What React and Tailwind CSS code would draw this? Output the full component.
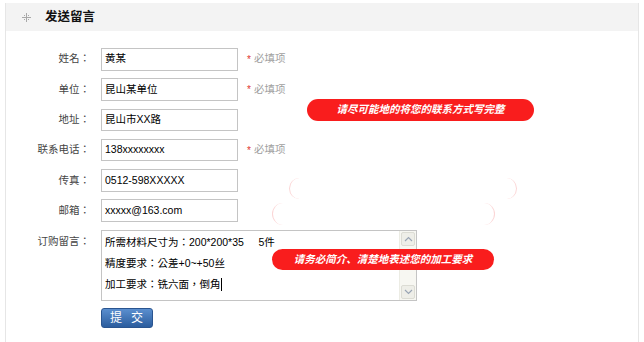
import React from 'react';

const font = { fontFamily: '"Liberation Sans", "Noto Sans CJK TC", "Noto Sans CJK SC", sans-serif' };
const pillFont = { fontFamily: '"Liberation Sans", "Noto Sans CJK SC", sans-serif' };

const fields = [
  { label: '姓名：', value: '黄某', required: true },
  { label: '单位：', value: '昆山某单位', required: true },
  { label: '地址：', value: '昆山市XX路', required: false },
  { label: '联系电话：', value: '138xxxxxxxx', required: true },
  { label: '传真：', value: '0512-598XXXXX', required: false },
  { label: '邮箱：', value: 'xxxxx@163.com', required: false },
];

const GridIcon = () => (
  <svg width="9" height="9" viewBox="0 0 9 9" className="text-[#a8a8a8]">
    <path d="M4.5 0v9M0 4.5h9" stroke="currentColor" strokeWidth="1" />
    <path d="M2 2h1v1H2zM6 2h1v1H6zM2 6h1v1H2zM6 6h1v1H6z" fill="currentColor" />
  </svg>
);

const Chevron = ({ up }) => (
  <svg width="9" height="6" viewBox="0 0 9 6">
    <path d={up ? 'M1 5l3.5-3.5L8 5' : 'M1 1l3.5 3.5L8 1'} fill="none" stroke="#9aa5b5" strokeWidth="1.2" />
  </svg>
);

const App = () => {
  return (
    <div className="relative w-[644px] h-[342px] overflow-hidden bg-white pt-[3px] pl-[5px]" style={font}>
      <div className="w-[634px] h-[400px] border-x border-[#e6e6e6]">
        <div className="h-[28px] bg-[#f3f3f3] flex items-center pl-[16px]">
          <GridIcon />
          <span className="ml-[14px] text-[12.5px] font-bold text-[#111]">发送留言</span>
        </div>

        <div className="pt-[17px] flex flex-col gap-[7.8px]">
          {fields.map((f) => (
            <div key={f.label} className="flex items-center h-[22.5px]">
              <div className="w-[84px] text-right text-[10.5px] text-[#444]">{f.label}</div>
              <div className="ml-[11px] w-[137px] h-[22.5px] border border-[#c4c4c4] flex items-center pl-[3px] text-[10.5px] text-black">
                {f.value}
              </div>
              {f.required && (
                <div className="ml-[9px] flex items-center text-[10.5px] text-[#a0a0a0]">
                  <span className="text-[#e0342f] text-[10px] mr-[3px]">*</span>
                  必填项
                </div>
              )}
            </div>
          ))}

          <div className="flex items-start">
            <div className="w-[84px] text-right text-[10.5px] text-[#444] pt-[4px]">订购留言：</div>
            <div className="ml-[11px] w-[316px] h-[71px] border border-[#c4c4c4] flex">
              <div className="flex-1 pl-[3px] pt-[1px] text-[10.5px] text-black leading-[21px]">
                <div className="whitespace-pre">所需材料尺寸为：200*200*35     5件</div>
                <div>精度要求：公差+0~+50丝</div>
                <div className="flex items-center">
                  加工要求：铣六面，倒角
                  <span className="inline-block w-px h-[13px] bg-black" />
                </div>
              </div>
              <div className="w-[17px] bg-[#f7f7f2] border-l border-[#ecece4] flex flex-col justify-between py-[1px]">
                <div className="h-[14px] mx-[1px] border border-[#dcdcd4] rounded-[2px] bg-[#eeeee8] flex items-center justify-center">
                  <Chevron up />
                </div>
                <div className="h-[14px] mx-[1px] border border-[#dcdcd4] rounded-[2px] bg-[#eeeee8] flex items-center justify-center">
                  <Chevron />
                </div>
              </div>
            </div>
          </div>
        </div>

        <div className="pl-[95px] pt-[7px]">
          <button className="w-[52px] h-[20px] rounded-[3px] bg-gradient-to-b from-[#5b8fcf] to-[#2b5d9e] border border-[#2a5590] text-white text-[12px] tracking-[9px] pl-[8px] flex items-center justify-center">
            提交
          </button>
        </div>
      </div>

      <div className="absolute left-[289px] top-[178px] w-[228px] h-[21px] rounded-full border-x border-y-0 border-[#fbd5d5]" />
      <div className="absolute left-[272px] top-[203px] w-[223px] h-[22px] rounded-full border-x border-y-0 border-[#fbd5d5]" />

      <div className="absolute left-[307px] top-[99px] w-[227px] h-[22px] rounded-full bg-[#f91d1d] flex items-center justify-center text-white italic font-bold text-[10.5px]" style={pillFont}>
        请尽可能地的将您的联系方式写完整
      </div>
      <div className="absolute left-[272px] top-[249px] w-[222px] h-[21px] rounded-full bg-[#f91d1d] flex items-center justify-center text-white italic font-bold text-[10.5px]" style={pillFont}>
        请务必简介、清楚地表述您的加工要求
      </div>
    </div>
  );
};

export default App;
